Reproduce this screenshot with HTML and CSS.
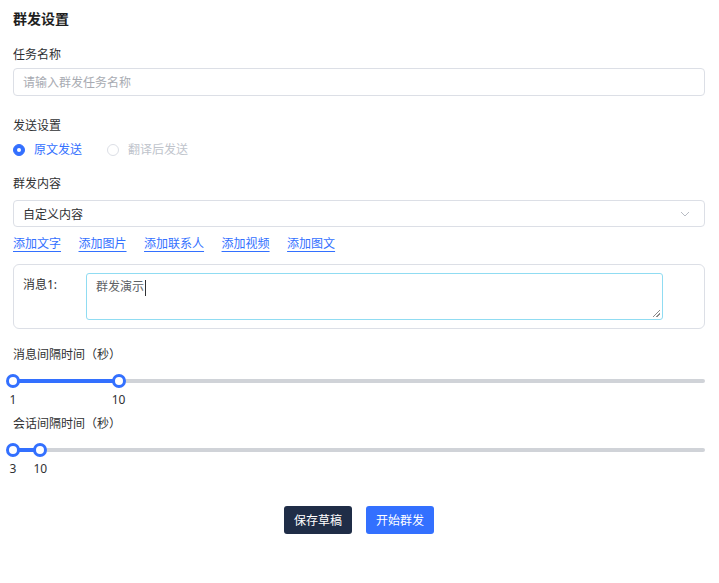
FILE: index.html
```html
<!DOCTYPE html>
<html lang="zh-CN">
<head>
<meta charset="utf-8">
<title>群发设置</title>
<link rel="stylesheet" href="styles.css">
</head>
<body>
<div class="page">
  <h1 class="title">群发设置</h1>

  <div class="label first">任务名称</div>
  <div class="input"><span class="placeholder">请输入群发任务名称</span></div>

  <div class="label send">发送设置</div>
  <div class="radios">
    <label class="radio checked"><span class="dot"></span><span class="rtext">原文发送</span></label>
    <label class="radio disabled"><span class="dot"></span><span class="rtext">翻译后发送</span></label>
  </div>

  <div class="label content">群发内容</div>
  <div class="select">
    <span class="select-text">自定义内容</span>
    <svg class="chev" width="10" height="6" viewBox="0 0 10 6"><path d="M1 1 L5 5 L9 1" fill="none" stroke="#b8bcc4" stroke-width="1"/></svg>
  </div>

  <div class="links">
    <a class="link">添加文字</a>
    <a class="link">添加图片</a>
    <a class="link">添加联系人</a>
    <a class="link">添加视频</a>
    <a class="link">添加图文</a>
  </div>

  <div class="msgbox">
    <div class="msglabel">消息1:</div>
    <div class="msgtext"><span>群发演示</span><span class="caret"></span></div>
  </div>

  <div class="label interval">消息间隔时间（秒）</div>
  <div class="slider">
    <div class="track"></div>
    <div class="range" style="left:0%;width:15.25%"></div>
    <span class="handle" style="left:0%"></span>
    <span class="handle" style="left:15.25%"></span>
  </div>
  <div class="values">
    <span class="val" style="left:0%">1</span>
    <span class="val" style="left:15.25%">10</span>
  </div>

  <div class="label interval2">会话间隔时间（秒）</div>
  <div class="slider">
    <div class="track"></div>
    <div class="range" style="left:0%;width:3.95%"></div>
    <span class="handle" style="left:0%"></span>
    <span class="handle" style="left:3.95%"></span>
  </div>
  <div class="values">
    <span class="val" style="left:0%">3</span>
    <span class="val" style="left:3.95%">10</span>
  </div>

  <div class="actions">
    <button class="btn dark">保存草稿</button>
    <button class="btn primary">开始群发</button>
  </div>
</div>
</body>
</html>
```

FILE: styles.css
```css
* { box-sizing: border-box; }
html, body { margin: 0; padding: 0; background: #fff; }
body {
  font-family: "Noto Sans", "Noto Sans CJK SC", sans-serif;
  font-size: 12px;
  color: #303133;
}
.page {
  width: 719px;
  padding: 9px 14px 0 13px;
}
.title {
  margin: 0;
  font-size: 14px;
  line-height: 20px;
  font-weight: 700;
  color: #1f1f1f;
}
.label {
  line-height: 20px;
  font-size: 12px;
  color: #303133;
}
.label.first { margin-top: 16px; }
.label.send { margin-top: 20px; }
.label.content { margin-top: 14px; }
.label.interval { margin-top: 16px; }
.label.interval2 { margin-top: 4px; }

.input, .select {
  margin-top: 3px;
  height: 28px;
  border: 1px solid #dcdfe6;
  border-radius: 4px;
  display: flex;
  align-items: center;
  padding: 0 9px;
}
.placeholder { color: #a8abb2; }
.select { margin-top: 6px; height: 27px; justify-content: space-between; }
.select-text { color: #303133; }
.chev { margin-right: 5px; }

.radios {
  margin-top: 4px;
  display: flex;
  gap: 25px;
  line-height: 20px;
}
.radio { display: flex; align-items: center; gap: 9px; }
.dot {
  width: 12px; height: 12px; border-radius: 50%;
  border: 1px solid #dcdfe6;
  background: #fff;
  position: relative;
}
.radio.checked .dot { background: #3370ff; border-color: #3370ff; }
.radio.checked .dot::after {
  content: ""; position: absolute; left: 3px; top: 3px;
  width: 4px; height: 4px; border-radius: 50%; background: #fff;
}
.radio.checked .rtext { color: #3370ff; }
.radio.disabled .rtext { color: #c0c4cc; }

.links {
  margin-top: 7px;
  display: flex;
  gap: 17.5px;
  line-height: 20px;
}
.link {
  color: #3370ff;
  text-decoration: underline;
  text-underline-offset: 3px;
  text-decoration-thickness: 1px;
}

.msgbox {
  margin-top: 10px;
  height: 65px;
  border: 1px solid #dcdfe6;
  border-radius: 6px;
  display: flex;
  padding: 8px 41px 8px 9px;
}
.msglabel {
  width: 63px;
  line-height: 20px;
  margin-top: 2px;
  color: #303133;
}
.msgtext {
  position: relative;
  flex: 1;
  height: 47px;
  border: 1px solid #90dcf2;
  border-radius: 3px;
  padding: 3px 9px;
  line-height: 20px;
  color: #606266;
  display: flex;
  align-items: flex-start;
}
.caret {
  width: 1px; height: 16px; margin-top: 3px; margin-left: 1px;
  background: #303133;
}
.msgtext::after {
  content: "";
  position: absolute; right: 2px; bottom: 2px;
  width: 7px; height: 7px;
  background: linear-gradient(135deg, transparent 45%, #8a8a8a 45%, #8a8a8a 55%, transparent 55%, transparent 70%, #8a8a8a 70%, #8a8a8a 80%, transparent 80%);
}

.slider {
  position: relative;
  margin-top: 9px;
  height: 14px;
}
.track {
  position: absolute; left: 0; right: 0; top: 5px; height: 4px;
  background: #d0d3d8; border-radius: 2px;
}
.range {
  position: absolute; top: 5px; height: 4px; background: #3370ff;
}
.handle {
  position: absolute; top: 0;
  width: 14px; height: 14px; margin-left: -7px;
  border-radius: 50%;
  border: 3px solid #3370ff;
  background: #fff;
}
.slider + .values { margin-top: 2px; }
.values {
  position: relative;
  height: 20px;
  line-height: 20px;
  color: #303133;
}
.val {
  position: absolute; top: 0;
  transform: translateX(-50%);
}

.actions {
  margin-top: 27px;
  display: flex;
  justify-content: center;
  gap: 14px;
}
.btn {
  height: 28px;
  padding: 0 10px;
  border: none;
  border-radius: 3px;
  font-family: inherit;
  font-size: 12px;
  color: #fff;
}
.btn.dark { background: #1f2d47; }
.btn.primary { background: #3370ff; }
```
